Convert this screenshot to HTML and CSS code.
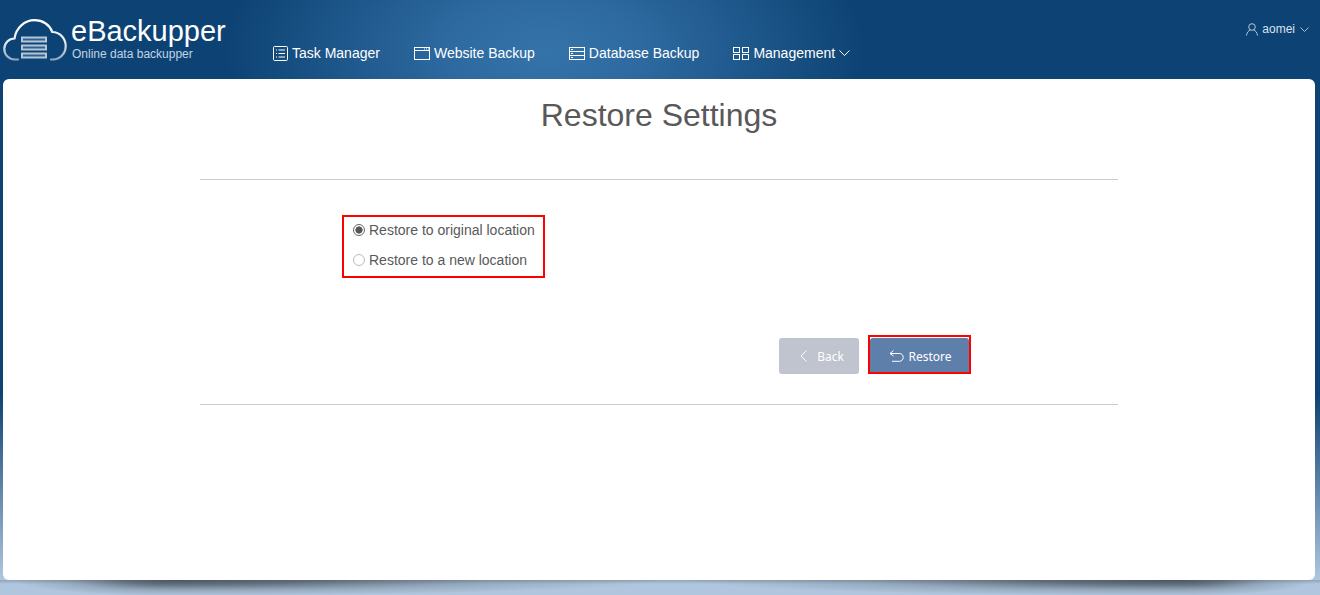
FILE: index.html
```html
<!DOCTYPE html>
<html lang="en">
<head>
<meta charset="utf-8">
<title>Restore Settings</title>
<link rel="stylesheet" href="styles.css">
</head>
<body>
<header class="topbar">
  <div class="brand">
    <svg class="logo" width="64" height="42" viewBox="0 0 64 42" fill="none">
      <defs><linearGradient id="lg" x1="0" y1="0" x2="0" y2="1"><stop offset="0" stop-color="#fff"/><stop offset="0.55" stop-color="#e4ecf4"/><stop offset="1" stop-color="#8ea8c2"/></linearGradient></defs>
      <path d="M15 40.500H12C5.500 40.500 1.300 35.500 1.300 30C1.300 24 6 19.500 11.500 19.500C13 9 21.500 1.200 31.500 1.200C39.500 1.200 46.500 5.500 49.300 13C57 13 62.700 19.500 62.700 27C62.700 35 56.500 40.500 50 40.500H48" stroke="url(#lg)" stroke-width="2.200" stroke-linecap="round"/>
      <path d="M19 18.500H43V22.500H19ZM19 26.500H43V30.500H19ZM19 34.500H43V38.500H19Z" fill="#2f608e" stroke="#b4c5d6" stroke-width="2"/>
    </svg>
    <div class="brand-text">
      <div class="brand-name">eBackupper</div>
      <div class="brand-sub">Online data backupper</div>
    </div>
  </div>
  <nav class="nav">
    <a class="nav-item">
      <svg width="15" height="15" viewBox="0 0 15 15" fill="none" stroke="#fff"><rect x="0.500" y="0.500" width="14" height="14" rx="1"/><path d="M3 4H4M5.500 4H12M3 7.500H4M5.500 7.500H12M3 11H4M5.500 11H12"/></svg>
      <span>Task Manager</span>
    </a>
    <a class="nav-item">
      <svg width="16" height="13" viewBox="0 0 16 13" fill="none" stroke="#fff"><rect x="0.500" y="0.500" width="15" height="12"/><path d="M0.500 3.500H15.500M10 2H11M12 2H13M14 2H15"/></svg>
      <span>Website Backup</span>
    </a>
    <a class="nav-item">
      <svg width="16" height="13" viewBox="0 0 16 13" fill="none" stroke="#fff"><rect x="0.500" y="0.500" width="15" height="12"/><path d="M0.500 4.500H15.500M0.500 8.500H15.500M2 2.500H4M2 6.500H4M2 10.500H4"/></svg>
      <span>Database Backup</span>
    </a>
    <a class="nav-item">
      <svg width="16" height="13" viewBox="0 0 16 13" fill="none" stroke="#fff"><rect x="0.500" y="0.500" width="6" height="5"/><rect x="9.500" y="0.500" width="6" height="5"/><rect x="0.500" y="7.500" width="6" height="5"/><rect x="9.500" y="7.500" width="6" height="5"/></svg>
      <span>Management</span>
      <svg class="caret" width="11" height="6" viewBox="0 0 11 6" fill="none" stroke="#fff"><path d="M0.500 0.500L5.500 5.500L10.500 0.500"/></svg>
    </a>
  </nav>
  <div class="user">
    <svg width="12" height="13" viewBox="0 0 12 13" fill="none" stroke="#b4c6d8"><circle cx="6" cy="4" r="3.300"/><path d="M0.500 12.500C0.800 9.500 2.500 7.500 4.500 7M11.500 12.500C11.200 9.500 9.500 7.500 7.500 7"/></svg>
    <span>aomei</span>
    <svg class="user-caret" width="9" height="5" viewBox="0 0 9 5" fill="none" stroke="#a9bed3"><path d="M0.500 0.500L4.500 4.500L8.500 0.500"/></svg>
  </div>
</header>
<main class="card">
  <h1 class="title">Restore Settings</h1>
  <div class="panel">
    <div class="options">
      <label class="option"><span class="radio radio-on"></span>Restore to original location</label>
      <label class="option"><span class="radio"></span>Restore to a new location</label>
    </div>
    <div class="actions">
      <button class="btn btn-back">
        <svg width="8" height="12" viewBox="0 0 8 12" fill="none" stroke="#fff"><path d="M6.500 0.500L1 6L6.500 11.500"/></svg>
        <span>Back</span>
      </button>
      <div class="btn-frame">
        <button class="btn btn-restore">
          <svg width="15" height="12" viewBox="0 0 15 12" fill="none" stroke="#fff"><path d="M4.500 0.500L1 3.500L4.500 6M1 3.500H10.500C12.800 3.500 14.200 5.200 14.200 7.300C14.200 9.500 12.800 11.300 10.500 11.300H3"/></svg>
          <span>Restore</span>
        </button>
      </div>
    </div>
  </div>
</main>
<div class="card-shadow"></div>
</body>
</html>
```
FILE: styles.css
```css
* { box-sizing: border-box; }
html, body { margin: 0; height: 100%; }
body {
  height: 595px;
  overflow: hidden;
  font-family: "Liberation Sans", Arial, sans-serif;
  background:
    radial-gradient(ellipse 320px 170px at 545px 50px, #3473a9 0%, #2e6aa0 30%, rgba(13, 67, 116, 0) 100%) no-repeat,
    linear-gradient(to bottom, #0d4374 0, #0d4374 395px, #b0c6de 580px, #b0c6de 595px);
}
.topbar { height: 79px; display: flex; position: relative; color: #fff; }
.brand { width: 273px; padding: 19px 0 0 3px; display: flex; gap: 5px; }
.logo { flex: none; }
.brand-text { margin-top: -2px; }
.brand-name { font-size: 29px; line-height: 29px; margin-left: -1px; }
.brand-sub { font-size: 12px; line-height: 14px; color: #c3d3e4; margin-top: 1px; }
.nav { display: flex; gap: 34px; padding-top: 45px; align-items: flex-start; font-size: 14px; line-height: 16px; }
.nav-item { display: flex; align-items: center; gap: 4px; color: #fff; }
.user { margin-left: auto; margin-right: 11px; padding-top: 22px; display: flex; align-items: flex-start; gap: 4px; font-size: 12px; line-height: 14px; color: #d7e2ee; }
.user svg { margin-top: 1px; }
.user .user-caret { margin: 5px 0 0 1px; }
.card {
  margin: 0 5px 0 3px;
  height: 501px;
  background: #fff;
  border-radius: 6px;
}
.title { margin: 0; padding-top: 18px; text-align: center; font-size: 32px; line-height: 37px; font-weight: 400; color: #595959; }
.panel {
  margin: 45px 197px 0;
  height: 226px;
  border-top: 1px solid #ccc;
  border-bottom: 1px solid #ccc;
  padding-top: 35px;
}
.options {
  margin-left: 142px;
  width: 203px;
  height: 63px;
  border: 2px solid #f00;
  padding: 0 0 0 9px;
  font-size: 14px;
  color: #595959;
}
.option { display: flex; align-items: center; gap: 4px; height: 30px; }
.option:first-child { margin-top: -2px; }
.radio { width: 12px; height: 12px; border-radius: 50%; border: 1px solid #bbb; background: #fff; flex: none; }
.radio-on { border-color: #666; background: radial-gradient(circle, #555 0, #555 3.300px, #fff 3.900px); }
.actions { display: flex; margin: 60px 0 0 579px; align-items: flex-start; }
.btn {
  border: 0;
  height: 36px;
  border-radius: 3px;
  color: #fff;
  font-family: "Noto Sans", sans-serif;
  font-size: 12px;
  display: flex;
  align-items: center;
  justify-content: center;
  padding: 0;
}
.btn-back { width: 80px; background: #bfc4ce; gap: 9px; padding-left: 6px; }
.btn-frame { margin: -3px 0 0 9px; width: 103px; height: 39px; border: 2px solid #f00; padding: 1px 0 0 0; overflow: hidden; }
.btn-restore { width: 99px; background: #5f7fab; gap: 4px; padding-left: 2px; }
.card-shadow {
  height: 15px;
  background-color: #b0c6de;
  background-repeat: no-repeat;
  background-image:
    linear-gradient(to bottom, rgba(71, 83, 94, 0.3), rgba(71, 83, 94, 0) 4px),
    radial-gradient(ellipse 155px 16px at 100% 0, rgba(71, 83, 94, 0.95) 0, rgba(71, 83, 94, 0.72) 30%, rgba(71, 83, 94, 0.25) 65%, rgba(71, 83, 94, 0) 100%),
    radial-gradient(ellipse 490px 16px at 0 0, rgba(71, 83, 94, 0.95) 0, rgba(71, 83, 94, 0.72) 30%, rgba(71, 83, 94, 0.25) 65%, rgba(71, 83, 94, 0) 100%),
    radial-gradient(ellipse 490px 16px at 100% 0, rgba(71, 83, 94, 0.95) 0, rgba(71, 83, 94, 0.72) 30%, rgba(71, 83, 94, 0.25) 65%, rgba(71, 83, 94, 0) 100%),
    radial-gradient(ellipse 135px 16px at 0 0, rgba(71, 83, 94, 0.95) 0, rgba(71, 83, 94, 0.72) 30%, rgba(71, 83, 94, 0.25) 65%, rgba(71, 83, 94, 0) 100%);
  background-size: 100% 15px, 170px 15px, 490px 15px, 520px 15px, 140px 15px;
  background-position: 0 0, 0 0, 170px 0, 660px 0, 1180px 0;
}
```
